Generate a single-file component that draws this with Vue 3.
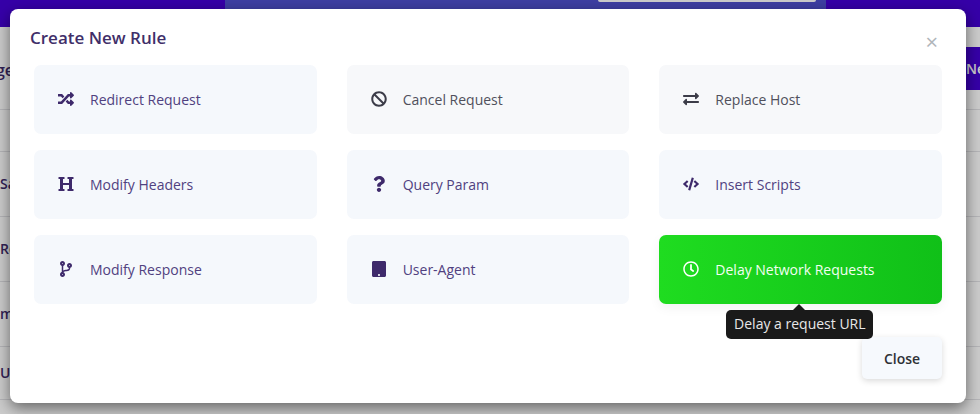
<script setup>
const rowLabels = ['Sa', 'Re', 'm', 'Ur']
const rules = [
  { label: 'Redirect Request', vb: '0 0 512 512', d: 'M504.971 359.029c9.373 9.373 9.373 24.569 0 33.941l-80 79.984c-15.01 15.01-40.971 4.49-40.971-16.971V416h-58.785a12.004 12.004 0 0 1-8.773-3.812l-70.556-75.596 53.333-57.143L352 336h32v-39.981c0-21.438 25.943-31.998 40.971-16.971l80 79.981zM12 176h84l52.781 56.551 53.333-57.143-70.556-75.596A11.999 11.999 0 0 0 122.785 96H12c-6.627 0-12 5.373-12 12v56c0 6.627 5.373 12 12 12zm372 0v39.984c0 21.46 25.961 31.98 40.971 16.971l80-79.984c9.373-9.373 9.373-24.569 0-33.941l-80-79.981C409.943 24.021 384 34.582 384 56.019V96h-58.785a12.004 12.004 0 0 0-8.773 3.812L96 336H12c-6.627 0-12 5.373-12 12v56c0 6.627 5.373 12 12 12h110.785c3.326 0 6.503-1.381 8.773-3.812L352 176h32z' },
  { label: 'Cancel Request', tone: 'muted', vb: '0 0 512 512', d: 'M256 8C119.034 8 8 119.033 8 256s111.034 248 248 248 248-111.034 248-248S392.967 8 256 8zm130.108 117.892c65.448 65.448 70 165.481 20.677 235.637L150.47 105.216c70.204-49.356 170.226-44.735 235.638 20.676zM125.892 386.108c-65.448-65.448-70-165.481-20.677-235.637L361.53 406.784c-70.203 49.356-170.226 44.736-235.638-20.676z' },
  { label: 'Replace Host', tone: 'muted', vb: '0 0 512 512', d: 'M0 168v-16c0-13.255 10.745-24 24-24h360V80c0-21.367 25.899-32.042 40.971-16.971l80 80c9.372 9.373 9.372 24.569 0 33.941l-80 80C409.956 271.982 384 261.456 384 240v-48H24c-13.255 0-24-10.745-24-24zm488 152H128v-48c0-21.314-25.862-32.08-40.971-16.971l-80 80c-9.372 9.373-9.372 24.569 0 33.941l80 80C102.057 463.997 128 453.437 128 432v-48h360c13.255 0 24-10.745 24-24v-16c0-13.255-10.745-24-24-24z' },
  { label: 'Modify Headers', vb: '0 0 512 512', d: 'M448 96v320h40a8 8 0 0 1 8 8v48a8 8 0 0 1-8 8H312a8 8 0 0 1-8-8v-48a8 8 0 0 1 8-8h40V288H160v128h40a8 8 0 0 1 8 8v48a8 8 0 0 1-8 8H24a8 8 0 0 1-8-8v-48a8 8 0 0 1 8-8h40V96H24a8 8 0 0 1-8-8V40a8 8 0 0 1 8-8h176a8 8 0 0 1 8 8v48a8 8 0 0 1-8 8h-40v128h192V96h-40a8 8 0 0 1-8-8V40a8 8 0 0 1 8-8h176a8 8 0 0 1 8 8v48a8 8 0 0 1-8 8z' },
  { label: 'Query Param', vb: '0 0 384 512', d: 'M202.021 0C122.202 0 70.503 32.703 29.914 91.026c-7.363 10.58-5.093 25.086 5.178 32.874l43.138 32.709c10.373 7.865 25.132 6.026 33.253-4.148 25.049-31.381 43.63-49.449 82.757-49.449 30.764 0 68.816 19.799 68.816 49.631 0 22.552-18.617 34.134-48.993 51.164-35.423 19.86-82.299 44.576-82.299 106.405V320c0 13.255 10.745 24 24 24h72.471c13.255 0 24-10.745 24-24v-5.773c0-42.86 125.268-44.645 125.268-160.627C377.504 66.256 286.902 0 202.021 0zM192 373.459c-38.196 0-69.271 31.075-69.271 69.271 0 38.195 31.075 69.27 69.271 69.27s69.271-31.075 69.271-69.271-31.075-69.27-69.271-69.27z' },
  { label: 'Insert Scripts', vb: '0 0 640 512', d: 'M278.9 511.5l-61-17.7c-6.4-1.8-10-8.5-8.2-14.9L346.2 8.7c1.8-6.4 8.5-10.1 14.9-8.2l61 17.7c6.4 1.8 10 8.5 8.2 14.9L293.8 503.3c-1.9 6.4-8.5 10.1-14.9 8.2zm-114-112.2l43.5-46.4c4.6-4.9 4.3-12.7-.8-17.2L117 256l90.6-79.7c5.1-4.5 5.5-12.3.8-17.2l-43.5-46.4c-4.5-4.8-12.1-5.1-17-.5L3.8 247.2c-5.1 4.7-5.1 12.8 0 17.5l144.1 135.1c4.9 4.6 12.5 4.4 17-.5zm327.2.6l144.1-135.1c5.1-4.7 5.1-12.8 0-17.5L492.1 112.1c-4.8-4.5-12.4-4.3-17 .5L431.6 159c-4.6 4.9-4.3 12.7.8 17.2L523 256l-90.6 79.7c-5.1 4.5-5.5 12.3-.8 17.2l43.5 46.4c4.5 4.9 12.1 5.1 17 .6z' },
  { label: 'Modify Response', vb: '0 0 384 512', d: 'M384 144c0-44.2-35.8-80-80-80s-80 35.8-80 80c0 36.4 24.3 67.1 57.5 76.8-.6 16.1-4.2 28.5-11 36.9-15.4 19.2-49.3 22.4-85.2 25.7-28.2 2.6-57.4 5.4-81.3 16.9v-144c32.5-10.2 56-40.5 56-76.3 0-44.2-35.8-80-80-80S0 35.8 0 80c0 35.8 23.5 66.1 56 76.3v199.3C23.5 365.9 0 396.2 0 432c0 44.2 35.8 80 80 80s80-35.8 80-80c0-34-21.2-63.1-51.2-74.6 3.1-5.2 7.8-9.8 14.9-13.4 16.2-8.2 40.4-10.4 66.1-12.8 42.2-3.9 90-8.4 118.2-43.4 14-17.4 21.1-39.8 21.6-67.9 31.6-10.8 54.4-40.7 54.4-75.9zM80 64c8.8 0 16 7.2 16 16s-7.2 16-16 16-16-7.2-16-16 7.2-16 16-16zm0 384c-8.8 0-16-7.2-16-16s7.2-16 16-16 16 7.2 16 16-7.2 16-16 16zm224-320c8.8 0 16 7.2 16 16s-7.2 16-16 16-16-7.2-16-16 7.2-16 16-16z' },
  { label: 'User-Agent', vb: '0 0 448 512', d: 'M400 0H48C21.5 0 0 21.5 0 48v416c0 26.5 21.5 48 48 48h352c26.5 0 48-21.5 48-48V48c0-26.5-21.5-48-48-48zM224 480c-17.7 0-32-14.3-32-32s14.3-32 32-32 32 14.3 32 32-14.3 32-32 32z' },
  { label: 'Delay Network Requests', tone: 'active', tip: 'Delay a request URL', vb: '0 0 512 512', d: 'M256 8C119 8 8 119 8 256s111 248 248 248 248-111 248-248S393 8 256 8zm0 448c-110.5 0-200-89.5-200-200S145.5 56 256 56s200 89.5 200 200-89.5 200-200 200zm61.8-104.4l-84.9-61.7c-3.1-2.3-4.9-5.9-4.9-9.7V116c0-6.6 5.4-12 12-12h32c6.6 0 12 5.4 12 12v141.7l66.8 48.6c5.4 3.9 6.5 11.4 2.6 16.8L334.6 349c-3.9 5.3-11.4 6.5-16.8 2.6z' }
]
</script>

<template>
  <div class="page">
    <header class="topbar">
      <div class="topmid"><div class="search"></div></div>
    </header>
    <div class="toolbar">
      <span class="heading">ge</span>
      <span class="newbtn">New</span>
    </div>
    <div class="table">
      <div v-for="r in rowLabels" :key="r" class="row">{{ r }}</div>
    </div>

    <div class="backdrop"></div>

    <section class="modal">
      <div class="modal-head">
        <h2 class="title">Create New Rule</h2>
        <span class="x">×</span>
      </div>
      <div class="grid">
        <div v-for="rule in rules" :key="rule.label" class="card" :class="rule.tone">
          <span class="icon">
            <svg width="16" height="16" :viewBox="rule.vb" aria-hidden="true"><path fill="currentColor" :d="rule.d" /></svg>
          </span>
          <span class="label">{{ rule.label }}</span>
          <div v-if="rule.tip" class="tip">{{ rule.tip }}</div>
        </div>
      </div>
      <div class="foot">
        <button class="close">Close</button>
      </div>
    </section>
  </div>
</template>

<style>
html, body { margin: 0; overflow: hidden; }
</style>

<style scoped>
.page {
  position: relative;
  width: 980px;
  height: 414px;
  overflow: hidden;
  background: #fff;
  font-family: "Open Sans", "Noto Sans", sans-serif;
}
.topbar {
  height: 27px;
  background: #4400d2;
  padding-left: 225px;
  box-sizing: border-box;
}
.topmid {
  width: 601px;
  height: 27px;
  background: #4e4fcc;
  padding-left: 373px;
  box-sizing: border-box;
}
.search {
  width: 218px;
  height: 2px;
  background: #fff;
  border-radius: 0 0 4px 4px;
}
.toolbar {
  height: 83px;
  padding-top: 20px;
  box-sizing: border-box;
  display: flex;
  justify-content: space-between;
  align-items: flex-start;
  border-bottom: 1px solid #e3e3e6;
}
.heading {
  margin: 12px 0 0 -4px;
  font-size: 16px;
  font-weight: 600;
  color: #3e2a6b;
}
.newbtn {
  width: 80px;
  margin-right: -66px;
  height: 43px;
  line-height: 43px;
  background: #4400d2;
  color: #fff;
  font-size: 14px;
  font-weight: 600;
}
.table { padding-top: 41px; }
.row {
  height: 64px;
  line-height: 64px;
  border-bottom: 1px solid #e3e3e6;
  font-size: 14px;
  font-weight: 600;
  color: #3e2a6b;
}
.row:first-child { border-top: 1px solid #e3e3e6; }
.row:last-child { height: 52px; line-height: 52px; }
.backdrop {
  position: absolute;
  inset: 0;
  background: rgba(0, 0, 0, 0.2);
}
.modal {
  position: absolute;
  left: 10px;
  top: 9px;
  width: 956px;
  height: 394px;
  box-sizing: border-box;
  background: #fff;
  border-radius: 8px;
  box-shadow: 0 5px 15px rgba(0, 0, 0, 0.5);
  padding: 0 24px;
}
.modal-head {
  height: 56px;
  display: flex;
  justify-content: space-between;
  margin-left: -4px;
}
.title {
  margin: 17px 0 0;
  font-size: 17px;
  line-height: 24px;
  font-weight: 600;
  color: #3f2f69;
}
.x {
  margin: 21px 4px 0 0;
  font-size: 22px;
  line-height: 22px;
  color: #b0b5ba;
}
.grid {
  display: grid;
  grid-template-columns: repeat(3, 1fr);
  grid-auto-rows: 69px;
  column-gap: 30px;
  row-gap: 16px;
}
.card {
  position: relative;
  display: flex;
  align-items: center;
  box-sizing: border-box;
  padding-left: 24px;
  background: #f5f8fc;
  border-radius: 7px;
  color: #3e2a6b;
  font-size: 14px;
}
.icon {
  width: 32px;
  height: 16px;
  margin-top: -2px;
  display: flex;
}
.label { color: #504180; line-height: 20px; }
.muted { background: #f7f8fa; color: #3c3c48; }
.muted .label { color: #50505c; }
.active {
  background: linear-gradient(90deg, #1fdc20 0%, #10c018 100%);
  color: #fff;
  box-shadow: 0 4px 12px rgba(0, 0, 0, 0.05);
}
.active .label { color: #f2fff2; }
.tip {
  position: absolute;
  left: 67px;
  top: 75px;
  width: 147px;
  height: 29px;
  line-height: 28px;
  text-align: center;
  background: #1a1a1a;
  color: #e8e8e8;
  border-radius: 5px;
  font-size: 14px;
  z-index: 2;
}
.tip::before {
  content: "";
  position: absolute;
  left: 67px;
  top: -6px;
  border-left: 6px solid transparent;
  border-right: 6px solid transparent;
  border-bottom: 6px solid #1a1a1a;
}
.foot {
  display: flex;
  justify-content: flex-end;
  padding-top: 33px;
}
.close {
  width: 80px;
  height: 42px;
  border: 0;
  border-radius: 5px;
  background: #f6f9fd;
  box-shadow: 0 2px 6px rgba(0, 0, 0, 0.15);
  color: #2e3136;
  font-family: inherit;
  font-size: 14px;
  font-weight: 600;
}
</style>
